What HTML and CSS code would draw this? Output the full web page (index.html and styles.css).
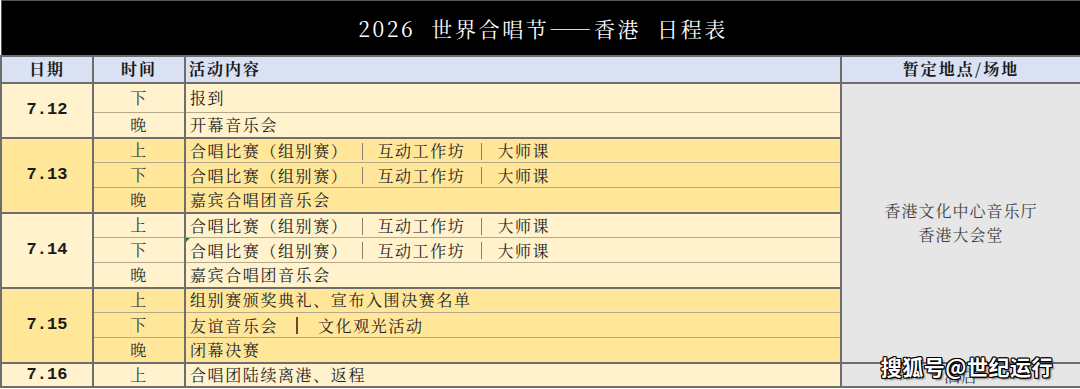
FILE: index.html
```html
<!DOCTYPE html>
<html lang="zh-CN">
<head>
<meta charset="utf-8">
<title>2026 世界合唱节——香港 日程表</title>
<link rel="stylesheet" href="styles.css">
</head>
<body>
<div class="page">
<table class="sched">
  <colgroup>
    <col class="c-date"><col class="c-time"><col class="c-act"><col class="c-venue">
  </colgroup>
  <tr class="title-row"><td colspan="4" class="title">2026&nbsp; 世界合唱节——香港&nbsp; 日程表</td></tr>
  <tr class="head-row">
    <th>日期</th><th>时间</th><th class="left">活动内容</th><th>暂定地点/场地</th>
  </tr>

  <tr class="g-light first r-tall">
    <td class="date" rowspan="2">7.12</td><td class="time">下</td><td class="act">报到</td>
    <td class="venue" rowspan="11">香港文化中心音乐厅<br>香港大会堂</td>
  </tr>
  <tr class="g-light"><td class="time">晚</td><td class="act">开幕音乐会</td></tr>

  <tr class="g-dark first">
    <td class="date" rowspan="3">7.13</td><td class="time">上</td>
    <td class="act"><span class="seg">合唱比赛（组别赛）</span><span class="bar"></span><span class="seg">互动工作坊</span><span class="bar"></span><span class="seg">大师课</span></td>
  </tr>
  <tr class="g-dark"><td class="time">下</td>
    <td class="act"><span class="seg">合唱比赛（组别赛）</span><span class="bar"></span><span class="seg">互动工作坊</span><span class="bar"></span><span class="seg">大师课</span></td>
  </tr>
  <tr class="g-dark"><td class="time">晚</td><td class="act">嘉宾合唱团音乐会</td></tr>

  <tr class="g-light first">
    <td class="date" rowspan="3">7.14</td><td class="time">上</td>
    <td class="act"><span class="seg">合唱比赛（组别赛）</span><span class="bar"></span><span class="seg">互动工作坊</span><span class="bar"></span><span class="seg">大师课</span></td>
  </tr>
  <tr class="g-light"><td class="time">下</td>
    <td class="act marked"><span class="seg">合唱比赛（组别赛）</span><span class="bar"></span><span class="seg">互动工作坊</span><span class="bar"></span><span class="seg">大师课</span></td>
  </tr>
  <tr class="g-light"><td class="time">晚</td><td class="act">嘉宾合唱团音乐会</td></tr>

  <tr class="g-dark first">
    <td class="date" rowspan="3">7.15</td><td class="time">上</td><td class="act">组别赛颁奖典礼、宣布入围决赛名单</td>
  </tr>
  <tr class="g-dark"><td class="time">下</td>
    <td class="act"><span class="seg">友谊音乐会</span><span class="bar bold"></span><span class="seg">文化观光活动</span></td>
  </tr>
  <tr class="g-dark"><td class="time">晚</td><td class="act">闭幕决赛</td></tr>

  <tr class="g-light first last">
    <td class="date">7.16</td><td class="time">上</td><td class="act">合唱团陆续离港、返程</td>
    <td class="venue">酒店</td>
  </tr>
</table>
<div class="watermark">搜狐号@世纪运行</div>
</div>
</body>
</html>
```

FILE: styles.css
```css
* { box-sizing: border-box; }
html, body { margin: 0; padding: 0; background: #ffffff; }
body {
  font-family: "Noto Serif CJK SC", "Noto Sans CJK SC", "Liberation Serif", serif;
  color: #1e1e1e;
}
.page { position: relative; width: 1080px; height: 389px; overflow: hidden; }

.sched {
  width: 1080px;
  border-collapse: collapse;
  table-layout: fixed;
}
.c-date { width: 92px; }
.c-time { width: 92px; }
.c-act { width: 656px; }
.c-venue { width: 240px; }

.sched td, .sched th {
  padding: 0;
  border: 1px solid #b3a98c;
  border-left: 2px solid #6e6e6e;
  border-right: 2px solid #6e6e6e;
  font-size: 16px;
  letter-spacing: 1.6px;
  line-height: 20px;
  white-space: nowrap;
  vertical-align: middle;
}

.sched tr td { height: 25px; }
.sched tr.r-tall td { height: 30px; }
.sched tr.last td { height: 24px; }

.sched tr.title-row td {
  background: #000;
  color: #fff;
  height: 55px;
  text-align: center;
  font-size: 21px;
  letter-spacing: 2.6px;
  line-height: 26px;
  border: 1px solid #555;
  border-bottom: 2px solid #6e6e6e;
  padding-left: 4px;
}

.head-row th {
  background: #d9e1f3;
  height: 27px;
  font-weight: 700;
  font-size: 16px;
  letter-spacing: 2px;
  text-align: center;
  border-bottom: 2px solid #6e6e6e;
  border-top: 2px solid #6e6e6e;
  color: #1a1a1a;
}
.head-row th.left { text-align: left; padding-left: 3px; }

.g-light td { background: #fff2cc; }
.g-dark td { background: #ffe699; }
.sched tr.first td { border-top: 2px solid #6e6e6e; }
.sched tr.last td { border-bottom: 2px solid #6e6e6e; }

.date {
  text-align: center;
  font-family: "Liberation Mono", monospace;
  font-weight: 700;
  font-size: 17px !important;
  letter-spacing: 0 !important;
  color: #1a1a1a;
}
.time { text-align: center; color: #333; }
.act { text-align: left; padding-left: 4px !important; color: #222; position: relative; }
.seg { display: inline-block; vertical-align: middle; }
.bar {
  display: inline-block;
  vertical-align: middle;
  width: 1px;
  height: 17px;
  background: #8a8170;
  margin: 0 14px 0 14px;
}
.bar + .seg + .bar { margin-left: 16px; margin-right: 15px; }
.bar.bold { width: 2px; background: #6a4a2a; margin: 0 20px 0 18px; }

.marked::before {
  content: "";
  position: absolute;
  left: 0;
  top: 0;
  width: 0;
  height: 0;
  border-top: 4px solid #1f7a3c;
  border-right: 4px solid transparent;
}

.sched td.venue {
  background: #e6e6e6;
  text-align: center;
  color: #404040;
  line-height: 24px;
  letter-spacing: 1px;
}
.sched tr.last td.venue { vertical-align: bottom; line-height: 20px; padding-bottom: 0; }

.watermark {
  position: absolute;
  right: 27px;
  bottom: 8px;
  font-family: "Noto Sans CJK SC", sans-serif;
  font-weight: 700;
  font-size: 21px;
  letter-spacing: 0.5px;
  color: #fff;
  text-shadow:
    -1px -1px 0 #000, 1px -1px 0 #000, -1px 1px 0 #000, 1px 1px 0 #000,
    0 1px 0 #000, 0 -1px 0 #000, 1px 0 0 #000, -1px 0 0 #000, 2px 2px 2px rgba(0,0,0,0.6);
}
```
